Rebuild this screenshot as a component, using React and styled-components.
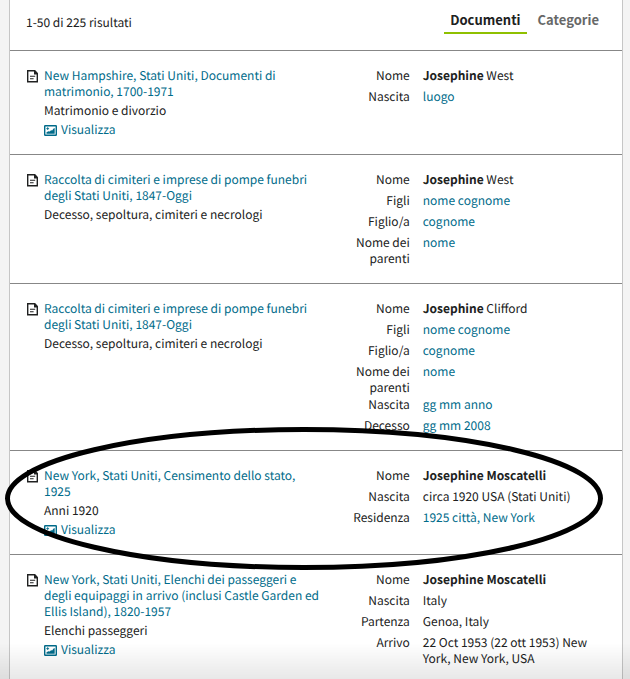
import React, { useState } from 'react';
import styled, { createGlobalStyle } from 'styled-components';

const GlobalStyle = createGlobalStyle`
  * {
    box-sizing: border-box;
  }

  body {
    margin: 0;
    background: #f4f4f4;
    color: #202121;
    font-family: 'Noto Sans CJK JP', 'Noto Sans', sans-serif;
    font-size: 12px;
    line-height: 16px;
    text-rendering: geometricPrecision;
  }
`;

const Panel = styled.main`
  min-height: 100vh;
  margin: 0 7px 0 9px;
  border: 1px solid #c6c6c6;
  border-width: 0 1px;
  background: #fff;
`;

const Header = styled.header`
  display: flex;
  align-items: flex-start;
  justify-content: space-between;
  padding: 8px 17px 16px 16px;
`;

const Count = styled.p`
  margin: 7px 0 0;
`;

const Tabs = styled.nav`
  display: flex;
  gap: 5px;
`;

const Tab = styled.button`
  padding: 0 6px;
  border: 0;
  border-bottom: 2px solid ${({ $active }) => ($active ? '#8fc000' : 'transparent')};
  background: none;
  color: ${({ $active }) => ($active ? '#202121' : '#676868')};
  font: inherit;
  font-size: 13px;
  font-weight: 700;
  line-height: 24px;
  cursor: pointer;
`;

const Row = styled.article`
  position: relative;
  display: grid;
  grid-template-columns: minmax(0, 51fr) minmax(0, 49fr);
  padding: 17px 17px 16px;
  border-top: 1px solid #878787;
`;

const Source = styled.div`
  display: grid;
  grid-template-columns: 12px minmax(0, 1fr);
  gap: 5px;
`;

const SourceBody = styled.div`
  display: flex;
  flex-direction: column;
  align-items: flex-start;
  gap: 3px;
`;

const Title = styled.h2`
  margin: 0;
  font-size: inherit;
  font-weight: 400;
`;

const Category = styled.p`
  margin: 0;
`;

const Link = styled.a`
  color: #006b8a;
  text-decoration: none;

  &:hover {
    text-decoration: underline;
  }
`;

const ViewLink = styled(Link)`
  display: flex;
  align-items: center;
  gap: 4px;
`;

const Facts = styled.dl`
  margin: 0;
  padding-left: 28px;
`;

const Fact = styled.div`
  display: grid;
  grid-template-columns: 60px minmax(0, 1fr);
  gap: 13px;
  min-height: 21px;
  padding-bottom: 1px;

  &:last-child {
    min-height: 0;
    padding-bottom: 0;
  }
`;

const Label = styled.dt`
  text-align: right;
`;

const Value = styled.dd`
  margin: 0;
`;

const Highlight = styled.svg`
  position: absolute;
  z-index: 1;
  top: -24px;
  left: -5px;
  width: calc(100% - 14px);
  height: calc(100% + 40px);
  overflow: visible;
  pointer-events: none;
`;

const Fade = styled.div`
  position: fixed;
  right: 0;
  bottom: 0;
  left: 0;
  height: 36px;
  background: linear-gradient(rgba(0, 0, 0, 0), rgba(0, 0, 0, 0.09));
  pointer-events: none;
`;

const DocumentIcon = () => (
  <svg width="12" height="16" viewBox="0 0 12 16" fill="none" aria-hidden="true">
    <path d="M.7 2.7H7.3L10.3 5.7V13.8H.7Z" stroke="#202121" strokeWidth="1.4" />
    <path d="M7 2H8L11 5.2V6.4H7Z" fill="#202121" />
    <path d="M3 8.3H8.2M3 10.7H6.6" stroke="#202121" strokeWidth="1.1" />
  </svg>
);

const ImageIcon = () => (
  <svg width="13" height="11" viewBox="0 0 13 11" fill="none" aria-hidden="true">
    <rect x=".7" y=".7" width="11.6" height="9.6" rx=".5" stroke="#006b8a" strokeWidth="1.4" />
    <path
      d="M2.5 8.8V7.3L4.5 6.3L5.8 6.6L7 5.2L8.2 5.5L9.3 3.8L10.7 3V8.8Z"
      fill="#006b8a"
    />
    <path d="M3.7 2.2V5M2.3 3.6H5.1" stroke="#006b8a" strokeWidth=".9" />
  </svg>
);

const cemeteries = {
  title: 'Raccolta di cimiteri e imprese di pompe funebri degli Stati Uniti, 1847-Oggi',
  category: 'Decesso, sepoltura, cimiteri e necrologi',
};

const relatives = [
  { label: 'Figli', link: 'nome cognome' },
  { label: 'Figlio/a', link: 'cognome' },
  { label: 'Nome dei parenti', link: 'nome' },
];

const records = [
  {
    id: 'new-hampshire',
    title: 'New Hampshire, Stati Uniti, Documenti di matrimonio, 1700-1971',
    category: 'Matrimonio e divorzio',
    hasImage: true,
    facts: [
      { label: 'Nome', match: 'Josephine', text: ' West' },
      { label: 'Nascita', link: 'luogo' },
    ],
  },
  {
    ...cemeteries,
    id: 'cimiteri-west',
    facts: [{ label: 'Nome', match: 'Josephine', text: ' West' }, ...relatives],
  },
  {
    ...cemeteries,
    id: 'cimiteri-clifford',
    facts: [
      { label: 'Nome', match: 'Josephine', text: ' Clifford' },
      ...relatives,
      { label: 'Nascita', link: 'gg mm anno' },
      { label: 'Decesso', link: 'gg mm 2008' },
    ],
  },
  {
    id: 'censimento',
    title: 'New York, Stati Uniti, Censimento dello stato, 1925',
    category: 'Anni 1920',
    hasImage: true,
    highlighted: true,
    facts: [
      { label: 'Nome', match: 'Josephine Moscatelli' },
      { label: 'Nascita', text: 'circa 1920 USA (Stati Uniti)' },
      { label: 'Residenza', link: '1925 città, New York' },
    ],
  },
  {
    id: 'passeggeri',
    title:
      'New York, Stati Uniti, Elenchi dei passeggeri e degli equipaggi in arrivo (inclusi Castle Garden ed Ellis Island), 1820-1957',
    category: 'Elenchi passeggeri',
    hasImage: true,
    facts: [
      { label: 'Nome', match: 'Josephine Moscatelli' },
      { label: 'Nascita', text: 'Italy' },
      { label: 'Partenza', text: 'Genoa, Italy' },
      { label: 'Arrivo', text: '22 Oct 1953 (22 ott 1953) New York, New York, USA' },
    ],
  },
];

const Record = ({ record }) => (
  <Row>
    <Source>
      <DocumentIcon />
      <SourceBody>
        <Title>
          <Link href={`#${record.id}`}>{record.title}</Link>
        </Title>
        <Category>{record.category}</Category>
        {record.hasImage && (
          <ViewLink href={`#${record.id}-immagine`}>
            <ImageIcon />
            Visualizza
          </ViewLink>
        )}
      </SourceBody>
    </Source>

    <Facts>
      {record.facts.map(({ label, match, text, link }) => (
        <Fact key={label}>
          <Label>{label}</Label>
          <Value>
            {match && <strong>{match}</strong>}
            {text}
            {link && <Link href={`#${record.id}`}>{link}</Link>}
          </Value>
        </Fact>
      ))}
    </Facts>

    {record.highlighted && (
      <Highlight viewBox="0 0 598 143" preserveAspectRatio="none" aria-hidden="true">
        <ellipse
          cx="299"
          cy="71.5"
          rx="296.5"
          ry="69"
          fill="none"
          stroke="#000"
          strokeWidth="5"
          vectorEffect="non-scaling-stroke"
        />
      </Highlight>
    )}
  </Row>
);

const tabs = ['Documenti', 'Categorie'];

const App = () => {
  const [activeTab, setActiveTab] = useState('Documenti');

  return (
    <>
      <GlobalStyle />
      <Panel>
        <Header>
          <Count>1-50 di 225 risultati</Count>
          <Tabs>
            {tabs.map(tab => (
              <Tab
                key={tab}
                type="button"
                $active={tab === activeTab}
                onClick={() => setActiveTab(tab)}
              >
                {tab}
              </Tab>
            ))}
          </Tabs>
        </Header>

        {records.map(record => (
          <Record key={record.id} record={record} />
        ))}
      </Panel>
      <Fade />
    </>
  );
};

export default App;
